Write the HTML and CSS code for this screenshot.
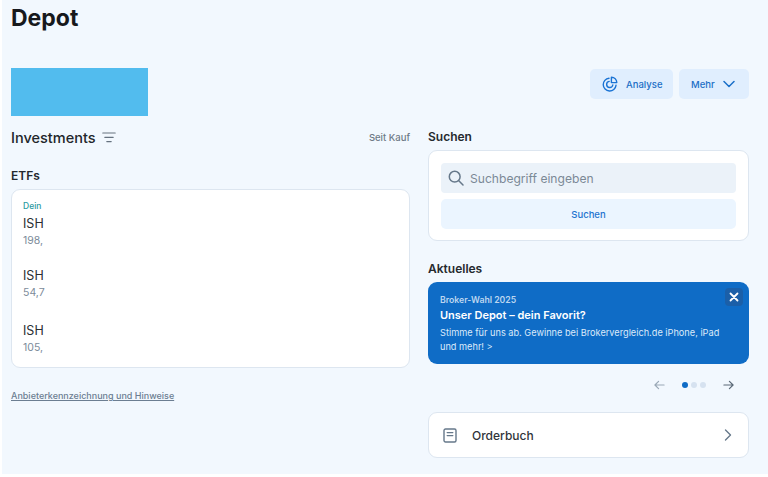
FILE: index.html
```html
<!DOCTYPE html>
<html lang="de">
<head>
<meta charset="utf-8">
<title>Depot</title>
<link rel="stylesheet" href="styles.css">
</head>
<body>
<main class="page">
  <h1 class="title">Depot</h1>
  <div class="summary">
    <div class="redacted"></div>
    <div class="actions">
      <button class="btn btn-analyse">
        <svg class="icon-analyse" viewBox="0 0 16 16" fill="none" stroke="#1a73d4" stroke-width="1.4" stroke-linecap="round"><path d="M7 2.2A6.4 6.4 0 1 0 14 9.3"/><path d="M7.2 5.4A3.1 3.1 0 1 0 10.8 9"/><path d="M9.4 1.2A5.6 5.6 0 0 1 14.8 6.6H9.4z" stroke-linejoin="round"/></svg>
        <span>Analyse</span>
      </button>
      <button class="btn btn-more">
        <span>Mehr</span>
        <svg class="icon-chev" viewBox="0 0 12 8" fill="none" stroke="#1a6fc9" stroke-width="1.5" stroke-linecap="round" stroke-linejoin="round"><path d="M1 1.5 6 6.5 11 1.5"/></svg>
      </button>
    </div>
  </div>
  <div class="columns">
    <section class="left">
      <div class="inv-head">
        <div class="inv-title">
          <h2>Investments</h2>
          <svg class="icon-filter" viewBox="0 0 14 11" fill="none" stroke="#66727f" stroke-width="1.2" stroke-linecap="round"><path d="M.8 1h12.4M2.8 5.3h8.4M4.8 9.6h4.4"/></svg>
        </div>
        <span class="since">Seit Kauf</span>
      </div>
      <h3 class="section-label etf-label">ETFs</h3>
      <div class="card etf-card">
        <div class="tag">Dein</div>
        <div class="row"><div class="name">ISH</div><div class="val">198,</div></div>
        <div class="row"><div class="name">ISH</div><div class="val">54,7</div></div>
        <div class="row row-last"><div class="name">ISH</div><div class="val">105,</div></div>
      </div>
      <a class="legal" href="#">Anbieterkennzeichnung und Hinweise</a>
    </section>
    <section class="right">
      <h3 class="section-label search-label">Suchen</h3>
      <div class="card search-card">
        <div class="search-input">
          <svg class="icon-search" viewBox="0 0 16 16" fill="none" stroke="#66788a" stroke-width="1.5" stroke-linecap="round"><circle cx="6.7" cy="6.7" r="5.4"/><path d="m10.8 10.8 4.2 4.2"/></svg>
          <span>Suchbegriff eingeben</span>
        </div>
        <button class="search-btn">Suchen</button>
      </div>
      <h3 class="section-label news-label">Aktuelles</h3>
      <div class="promo">
        <button class="close" aria-label="Schließen"><svg viewBox="0 0 10 10" fill="none" stroke="#fff" stroke-width="1.8" stroke-linecap="round"><path d="m1.5 1.5 7 7M8.5 1.5l-7 7"/></svg></button>
        <div class="promo-kicker">Broker-Wahl 2025</div>
        <div class="promo-title">Unser Depot – dein Favorit?</div>
        <p class="promo-text">Stimme für uns ab. Gewinne bei Brokervergleich.de iPhone, iPad und mehr! &gt;</p>
      </div>
      <div class="pager">
        <svg class="arrow" viewBox="0 0 12 10" fill="none" stroke="#9aa8b6" stroke-width="1.3" stroke-linecap="round" stroke-linejoin="round"><path d="M11 5H1M5 1 1 5l4 4"/></svg>
        <div class="dots"><i class="dot dot-on"></i><i class="dot"></i><i class="dot"></i></div>
        <svg class="arrow" viewBox="0 0 12 10" fill="none" stroke="#5b6977" stroke-width="1.3" stroke-linecap="round" stroke-linejoin="round"><path d="M1 5h10M7 1l4 4-4 4"/></svg>
      </div>
      <div class="card order">
        <svg class="icon-book" viewBox="0 0 14 15" fill="none" stroke="#66788a" stroke-width="1.4" stroke-linecap="round" stroke-linejoin="round"><rect x="1" y="1" width="12" height="13" rx="1.5"/><path d="M4.2 4.6h5.6M4.2 7.6h5.6"/></svg>
        <span class="order-label">Orderbuch</span>
        <svg class="icon-next" viewBox="0 0 8 12" fill="none" stroke="#66788a" stroke-width="1.4" stroke-linecap="round" stroke-linejoin="round"><path d="m1.5 1 5 5-5 5"/></svg>
      </div>
    </section>
  </div>
</main>
</body>
</html>
```
FILE: styles.css
```css
* { box-sizing: border-box; }
html, body { margin: 0; padding: 0; height: 477px; background: #fff; overflow: hidden; }
body { font-family: "Inter", "Noto Sans", sans-serif; color: #22262b; }
.page { margin-left: 2px; height: 474px; background: #f2f8fe; padding: 4px 19px 0 9px; }
h1, h2, h3, p { margin: 0; }
button { font-family: inherit; border: 0; padding: 0; }
.title { font-size: 23px; line-height: 29px; font-weight: 700; color: #17191c; }
.summary { display: flex; justify-content: space-between; align-items: flex-start; margin-top: 35px; height: 58px; }
.redacted { width: 137px; height: 48px; background: #52bcee; }
.actions { display: flex; gap: 6px; padding-top: 1px; }
.btn { height: 30px; background: #e0eefe; border-radius: 5px; display: flex; align-items: center; color: #1c6fc6; font-size: 9.5px; font-weight: 500; }
.btn-analyse { width: 83px; padding-left: 12px; gap: 8px; }
.icon-analyse { width: 16px; height: 16px; }
.btn-more { width: 70px; padding-left: 12px; gap: 8px; }
.icon-chev { width: 12px; height: 8px; }
.columns { display: grid; grid-template-columns: 399px 321px; column-gap: 18px; }
.inv-head { display: flex; justify-content: space-between; align-items: center; height: 22px; }
.inv-title { display: flex; align-items: center; gap: 6px; }
.inv-title h2 { font-size: 14.5px; font-weight: 500; }
.icon-filter { width: 14px; height: 11px; }
.since { font-size: 9.5px; font-weight: 500; color: #6e7a86; }
.section-label { font-size: 12px; line-height: 17px; font-weight: 600; color: #25292e; }
.etf-label { margin-top: 19px; }
.card { background: #fff; border: 1px solid #dde6f0; border-radius: 9px; }
.etf-card { margin-top: 5px; height: 179px; padding: 10px 11px 0; }
.tag { font-size: 8.5px; line-height: 12px; font-weight: 500; color: #2a9a9f; }
.row { height: 52px; padding-top: 3px; }
.row-last { margin-top: 3px; }
.name { font-size: 12.5px; line-height: 18px; color: #2a2e33; }
.val { font-size: 10.5px; line-height: 15px; color: #7c8b9a; }
.legal { display: inline-block; margin-top: 22px; font-size: 9px; font-weight: 500; color: #6c7e92; }
.search-label { margin-top: 2px; }
.search-card { margin-top: 5px; height: 91px; padding: 12px 12px 0; display: flex; flex-direction: column; gap: 6px; }
.search-input { height: 30px; border-radius: 4px; background: #ebf2f9; display: flex; align-items: center; gap: 6px; padding-left: 7px; font-size: 12.1px; color: #7b8996; }
.icon-search { width: 16px; height: 16px; }
.search-btn { height: 30px; border-radius: 5px; background: #ebf5ff; color: #1f74cf; font-size: 9.5px; font-weight: 500; }
.news-label { margin-top: 19px; }
.promo { position: relative; margin-top: 5px; height: 82px; background: #0f6cc6; border-radius: 9px; padding: 12px 12px 0; color: #fff; }
.close { position: absolute; top: 6px; right: 6px; width: 18px; height: 18px; border-radius: 4px; background: #1b5fa8; display: flex; align-items: center; justify-content: center; }
.close svg { width: 10px; height: 10px; }
.promo-kicker { font-size: 8.7px; line-height: 12px; font-weight: 600; color: #bcd6f0; }
.promo-title { margin-top: 2px; font-size: 11px; line-height: 15px; font-weight: 600; }
.promo-text { margin-top: 3px; font-size: 9.2px; line-height: 14px; color: #dceafa; }
.pager { display: flex; justify-content: flex-end; align-items: center; height: 20px; margin-top: 11px; padding-right: 15px; }
.arrow { width: 11px; height: 10px; }
.dots { display: flex; gap: 3px; margin: 0 17px 0 17px; }
.dot { width: 6px; height: 6px; border-radius: 50%; background: #d6e2f0; }
.dot-on { background: #0f6cc6; }
.order { margin-top: 17px; height: 46px; display: flex; align-items: center; padding: 0 16px 0 14px; }
.icon-book { width: 14px; height: 15px; }
.order-label { margin-left: 15px; font-size: 12px; font-weight: 500; color: #2f343a; flex: 1; }
.icon-next { width: 8px; height: 12px; }
```
